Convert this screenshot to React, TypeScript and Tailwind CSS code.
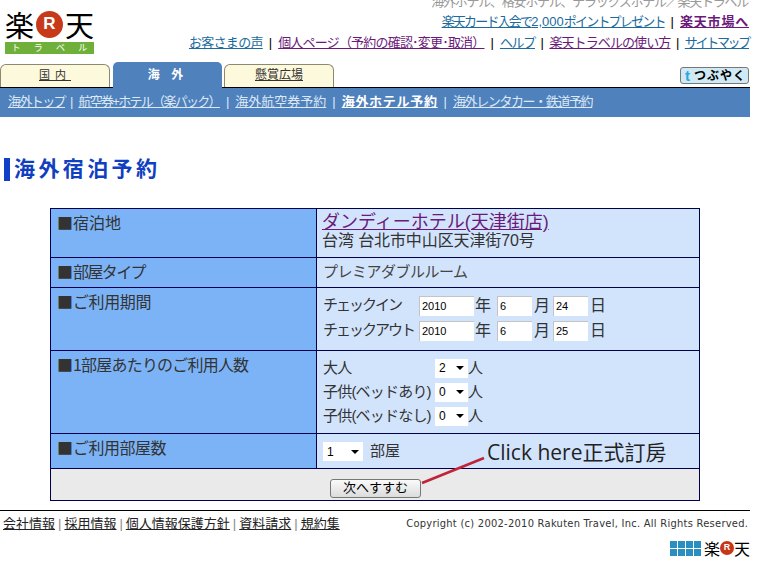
import React from 'react'

const CJK = "font-['Liberation_Sans','Noto_Sans_CJK_JP',sans-serif]"
const VISITED = 'text-[#6b1a7a] underline'
const LINK = 'text-[#1c6b9c] underline'

function Sep({ className = 'mx-[6px]' }: { className?: string }) {
  return <span className={`no-underline ${className}`}>|</span>
}

function Logo() {
  return (
    <div className="w-[89px] ml-[5px] pt-[9px]">
      <div className="flex items-center justify-between h-[30px] text-[29px] leading-[30px] text-black font-['Noto_Sans_CJK_JP',sans-serif]">
        <span className="w-[29px]">楽</span>
        <span className="w-[27px] h-[27px] rounded-full bg-[#c63a1a] text-white text-[17px] font-bold flex items-center justify-center font-['Liberation_Sans',sans-serif]">R</span>
        <span className="w-[29px]">天</span>
      </div>
      <div className="h-[12px] mt-[3px] bg-[#6fb03a] text-white text-[9px] leading-[12px] flex justify-around">
        <span>ト</span><span>ラ</span><span>ベ</span><span>ル</span>
      </div>
    </div>
  )
}

function Tab({ label, active, spaced }: { label: string; active?: boolean; spaced?: boolean }) {
  if (active) {
    return (
      <div className="w-[109px] h-[26px] -mb-px rounded-t-[5px] bg-[#4f81bd] text-white text-[12px] font-bold tracking-[4px] text-center leading-[26px] z-10">
        {label}
      </div>
    )
  }
  return (
    <div className={`w-[110px] h-[23px] rounded-t-[6px] border border-b-0 border-[#8a8a70] bg-[#fdf9dc] text-[#333] text-center leading-[21px] ${spaced ? 'text-[11px] tracking-[5px]' : 'text-[12px]'}`}>
      <span className="underline">{label}</span>
    </div>
  )
}

function DateRow({ label, y, m, d }: { label: string; y: string; m: string; d: string }) {
  return (
    <div className="flex items-center h-[25px]">
      <span className="w-[96px] text-[15px] tracking-[-2px] whitespace-nowrap">{label}</span>
      <input readOnly value={y} className="w-[55px] h-[20px] bg-white pl-[2px] text-[11px] text-black border-t border-l border-[#c4c4c4] outline-none" />
      <span className="w-[23px] pl-[1px] text-[16px]">年</span>
      <input readOnly value={m} className="w-[35px] h-[20px] bg-white pl-[2px] text-[11px] text-black border-t border-l border-[#c4c4c4] outline-none" />
      <span className="w-[21px] pl-[2px] text-[16px]">月</span>
      <input readOnly value={d} className="w-[35px] h-[20px] bg-white pl-[2px] text-[11px] text-black border-t border-l border-[#c4c4c4] outline-none" />
      <span className="w-[20px] pl-[2px] text-[16px]">日</span>
    </div>
  )
}

function FakeSelect({ value, width }: { value: string; width: string }) {
  return (
    <span className={`inline-flex items-center justify-between h-[19px] bg-white pl-[4px] pr-[4px] text-[12px] text-black ${width}`}>
      {value}
      <span className="w-0 h-0 border-x-[4px] border-x-transparent border-t-[4px] border-t-black" />
    </span>
  )
}

function PersonRow({ label, value }: { label: string; value: string }) {
  return (
    <div className="flex items-center h-[24px]">
      <span className="w-[112px] text-[15px] tracking-[-0.8px] whitespace-nowrap">{label}</span>
      <FakeSelect value={value} width="w-[33px]" />
      <span className="text-[15px]">人</span>
    </div>
  )
}

function Row({ label, height, tracking, children, pad = 'pt-[4px]' }: { label: string; height: string; tracking: string; children: React.ReactNode; pad?: string }) {
  return (
    <div className={`flex border-b border-[#000050] ${height}`}>
      <div className="w-[266px] shrink-0 bg-[#7cb3f7] border-r border-[#000050] pl-[6px] pt-[2px] text-[16px] leading-[22px] text-[#333] font-['Noto_Sans_CJK_JP',sans-serif]">
        ■<span className={tracking}>{label}</span>
      </div>
      <div className={`flex-1 bg-[#d2e4fc] pl-[6px] text-[#333] ${pad}`}>{children}</div>
    </div>
  )
}

export default function App() {
  return (
    <div className={`w-[757px] h-[564px] overflow-hidden bg-white ${CJK}`}>
      <div className="w-[750px]">
        {/* header */}
        <div className="flex justify-between h-[62px]">
          <Logo />
          <div className="text-right text-[13px] pr-[1px]">
            <div className="h-[9px] leading-[9px] text-[#999] overflow-hidden pr-px tracking-[-1.25px]">
              <div className="-mt-[5px] leading-[14px]">海外ホテル、格安ホテル、デラックスホテル／楽天トラベル</div>
            </div>
            <div className="mt-[3px] h-[20px] leading-[20px] whitespace-nowrap">
              <span className={`${LINK} tracking-[-1.8px]`}>楽天カード入会で<span className="tracking-normal">2,000</span>ポイントプレゼント</span>
              <Sep className="mx-[6px] text-black" />
              <span className="text-[#6b1a7a] underline font-bold tracking-[0.8px]">楽天市場へ</span>
            </div>
            <div className="mt-[1px] h-[20px] leading-[20px] whitespace-nowrap">
              <span className={`${LINK} tracking-[-0.7px]`}>お客さまの声</span>
              <Sep className="mx-[6px] text-black" />
              <span className={`${VISITED} tracking-[-0.8px]`}>個人ページ（予約の確認･変更･取消）</span>
              <Sep className="mx-[6px] text-black" />
              <span className={`${LINK} tracking-[-1.3px]`}>ヘルプ</span>
              <Sep className="mx-[5.5px] text-black" />
              <span className={`${VISITED} tracking-[-0.9px]`}>楽天トラベルの使い方</span>
              <Sep className="mx-[5.5px] text-black" />
              <span className={`${LINK} tracking-[-2.3px]`}>サイトマップ</span>
            </div>
          </div>
        </div>

        {/* tabs */}
        <div className="flex items-end h-[26px] border-b border-black">
          <Tab label="国内" spaced />
          <div className="w-[3px]" />
          <Tab label="海 外" active />
          <div className="w-[2px]" />
          <Tab label="懸賞広場" />
          <div className="ml-auto mb-[3px] mr-px w-[69px] h-[17px] rounded-[3px] border border-[#777] bg-[#cfeaf5] flex items-center pl-[4px] text-[12px] font-bold text-black tracking-[1px] whitespace-nowrap">
            <span className="text-[#2aa9e0] text-[15px] leading-none mr-[3px]">t</span>つぶやく
          </div>
        </div>

        {/* sub nav */}
        <div className="h-[29px] bg-[#4f81bd] pl-[8px] text-[13px] leading-[28px] text-[#dce8f6] whitespace-nowrap">
          <span className="underline tracking-[-1.6px]">海外トップ</span>
          <Sep className="mx-[5px]" />
          <span className="underline tracking-[-1.7px]">航空券+ホテル（楽パック）</span>
          <Sep />
          <span className="underline">海外航空券予約</span>
          <Sep />
          <span className="underline font-bold text-white tracking-[0.7px]">海外ホテル予約</span>
          <Sep />
          <span className="underline tracking-[-1.4px]">海外レンタカー・鉄道予約</span>
        </div>

        {/* title */}
        <div className="mt-[40px] ml-[4px] h-[24px] flex items-center">
          <span className="w-[6px] h-[23px] bg-[#1040c8]" />
          <h1 className="ml-[4px] text-[21px] font-bold tracking-[3.4px] text-[#1040c0]">海外宿泊予約</h1>
        </div>

        {/* form table */}
        <div className="relative mt-[27px] ml-[50px] w-[650px] border-t border-x border-[#000050]">
          <Row label="宿泊地" tracking="" height="h-[49px]" pad="pt-[2px]">
            <div className={`text-[18px] leading-[22px] -ml-px ${VISITED}`}>ダンディーホテル(天津街店)</div>
            <div className="text-[16px] leading-[17px] -mt-[1px] -ml-px tracking-[-0.1px]">台湾 台北市中山区天津街70号</div>
          </Row>
          <Row label="部屋タイプ" tracking="tracking-[-1.6px]" height="h-[30px]" pad="pt-[3px]">
            <div className="text-[15px] leading-[22px] tracking-[-0.5px] text-[#444]">プレミアダブルルーム</div>
          </Row>
          <Row label="ご利用期間" tracking="tracking-[-0.4px]" height="h-[63px]" pad="pt-[5px]">
            <DateRow label="チェックイン" y="2010" m="6" d="24" />
            <DateRow label="チェックアウト" y="2010" m="6" d="25" />
          </Row>
          <Row label="1部屋あたりのご利用人数" tracking="tracking-[-0.8px]" height="h-[83px]" pad="pt-[5px]">
            <PersonRow label="大人" value="2" />
            <PersonRow label="子供(ベッドあり)" value="0" />
            <PersonRow label="子供(ベッドなし)" value="0" />
          </Row>
          <Row label="ご利用部屋数" tracking="tracking-[-0.5px]" height="h-[35px]" pad="pt-[8px]">
            <div className="flex items-center h-[19px]">
              <FakeSelect value="1" width="w-[40px]" />
              <span className="ml-[7px] text-[15px]">部屋</span>
            </div>
          </Row>
          <div className="h-[32px] bg-[#eaeaea] border-b border-[#000050] pl-[279px] pt-[6px]">
            <button className="w-[91px] h-[19px] rounded-[3px] border border-[#777] bg-gradient-to-b from-[#fafafa] to-[#dcdcdc] text-[13px] leading-[16px] text-black">
              次へすすむ
            </button>
          </div>

          {/* annotation drawn on top of the screenshot */}
          <span className="absolute left-[436px] top-[230px] text-[21px] leading-[26px] text-[#222] whitespace-nowrap font-['Open_Sans','Noto_Sans_CJK_TC',sans-serif]">
            Click here正式訂房
          </span>
          <svg className="absolute left-[365px] top-[243px]" width="80" height="35" viewBox="0 0 80 35">
            <line x1="6" y1="31" x2="68" y2="6" stroke="#c0243a" strokeWidth="2.6" />
          </svg>
        </div>

        {/* footer */}
        <div className="mt-[9px] border-t border-black flex justify-between pt-[3px] h-[26px]">
          <div className="pl-[3px] text-[13px] leading-[19px] text-[#222] whitespace-nowrap">
            <span className="underline">会社情報</span><span className="mx-[3px] text-[#888]">|</span>
            <span className="underline">採用情報</span><span className="mx-[3px] text-[#888]">|</span>
            <span className="underline">個人情報保護方針</span><span className="mx-[3px] text-[#888]">|</span>
            <span className="underline">資料請求</span><span className="mx-[3px] text-[#888]">|</span>
            <span className="underline">規約集</span>
          </div>
          <div className="pr-[2px] text-[11px] leading-[19px] text-[#333] tracking-[0.3px] whitespace-nowrap font-['DejaVu_Sans',sans-serif] scale-x-90 origin-right">
            Copyright (c) 2002-2010 Rakuten Travel, Inc. All Rights Reserved.
          </div>
        </div>
        <div className="mt-[2px] flex justify-end items-center h-[20px]">
          <svg width="32" height="15" viewBox="0 0 32 15" className="mr-[2px]">
            {[0, 8, 16, 24].map(x => [0, 8].map(y => <rect key={`${x}-${y}`} x={x} y={y} width="7" height="7" fill="#2a8fc0" />))}
          </svg>
          <span className="text-[16px] leading-none text-black font-['Noto_Sans_CJK_JP',sans-serif]">楽</span>
          <span className="w-[14px] h-[14px] rounded-full bg-[#c8361a] text-white text-[9px] font-bold flex items-center justify-center">R</span>
          <span className="text-[16px] leading-none text-black font-['Noto_Sans_CJK_JP',sans-serif]">天</span>
        </div>
      </div>
    </div>
  )
}
